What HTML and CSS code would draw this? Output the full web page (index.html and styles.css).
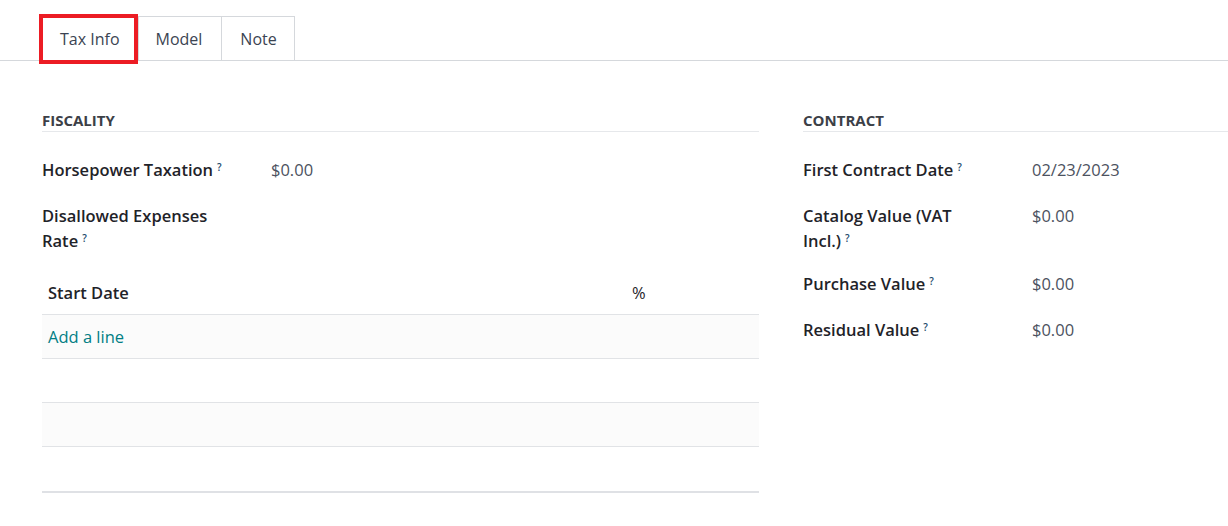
FILE: index.html
```html
<!DOCTYPE html>
<html>
<head>
<meta charset="utf-8">
<link rel="stylesheet" href="styles.css">
</head>
<body>
<div class="tabs">
  <div class="tab active">Tax Info</div>
  <div class="tab model">Model</div>
  <div class="tab note">Note</div>
</div>
<div class="sheet">
  <div class="group">
    <div class="heading">Fiscality</div>
    <div class="row">
      <div class="label">Horsepower Taxation<sup>?</sup></div>
      <div class="value">$0.00</div>
    </div>
    <div class="row">
      <div class="label">Disallowed Expenses Rate<sup>?</sup></div>
      <div class="value"></div>
    </div>
    <table class="lines">
      <thead>
        <tr><th class="c-date">Start Date</th><th class="c-pct">%</th></tr>
      </thead>
      <tbody>
        <tr class="odd"><td class="add" colspan="2">Add a line</td></tr>
        <tr><td colspan="2"></td></tr>
        <tr class="odd"><td colspan="2"></td></tr>
        <tr class="last"><td colspan="2"></td></tr>
      </tbody>
    </table>
  </div>
  <div class="group">
    <div class="heading">Contract</div>
    <div class="row">
      <div class="label">First Contract Date<sup>?</sup></div>
      <div class="value">02/23/2023</div>
    </div>
    <div class="row">
      <div class="label">Catalog Value (VAT Incl.)<sup>?</sup></div>
      <div class="value">$0.00</div>
    </div>
    <div class="row">
      <div class="label">Purchase Value<sup>?</sup></div>
      <div class="value">$0.00</div>
    </div>
    <div class="row">
      <div class="label">Residual Value<sup>?</sup></div>
      <div class="value">$0.00</div>
    </div>
  </div>
</div>
</body>
</html>
```
FILE: styles.css
```css
html, body {
  margin: 0;
  padding: 0;
  background: #ffffff;
}
body {
  width: 1228px;
  height: 526px;
  overflow: hidden;
  font-family: "Open Sans", "Noto Sans", sans-serif;
  font-size: 16.5px;
  color: #212529;
}
.tabs {
  display: flex;
  padding: 16px 0 0 40px;
  border-bottom: 1px solid #d5d8dc;
  height: 44px;
}
.tab {
  position: relative;
  height: 44px;
  box-sizing: border-box;
  border: 1px solid #d5d8dc;
  border-bottom: none;
  margin-left: -1px;
  padding: 0 18px 0 16px;
  line-height: 44px;
  font-size: 16px;
  color: #3b4452;
}
.tab.model {
  padding: 0 19px 0 17px;
}
.tab.note {
  padding: 0 17px 0 18px;
}
.tab:first-child {
  margin-left: 0;
}
.tab.active {
  background: #fff;
  height: 45px;
  margin-bottom: -1px;
  padding: 0 18px 0 19px;
}
.tab.active::after {
  content: "";
  position: absolute;
  left: -2px;
  top: -3px;
  width: 99px;
  height: 50px;
  box-sizing: border-box;
  border: 4px solid #ec1c24;
}
.sheet {
  display: grid;
  grid-template-columns: 717px 717px;
  column-gap: 44px;
  padding: 49px 0 0 42px;
}
.heading {
  font-size: 15px;
  font-weight: 700;
  text-transform: uppercase;
  line-height: 20px;
  color: #3c4047;
  padding-bottom: 1px;
  border-bottom: 1px solid #e6e8eb;
  margin-bottom: 25px;
}
.row {
  display: grid;
  grid-template-columns: 229px 1fr;
  margin-bottom: 18px;
  min-height: 28px;
}
.label {
  font-weight: 600;
  line-height: 25px;
  padding-right: 38px;
  color: #1f2329;
}
.label sup {
  font-size: 10px;
  font-weight: 600;
  color: #1b4a6b;
  margin-left: 4px;
  vertical-align: 5px;
  line-height: 0;
}
.value {
  line-height: 25px;
  color: #4c5260;
}
.lines {
  width: 717px;
  border-collapse: collapse;
}
.lines th {
  text-align: left;
  height: 43px;
  padding: 0 6px;
  border-bottom: 1px solid #e1e3e6;
  color: #1f2329;
}
.lines th.c-date {
  font-weight: 600;
}
.lines th.c-pct {
  font-weight: 400;
  width: 121px;
}
.lines td {
  height: 43px;
  padding: 0 6px;
  border-bottom: 1px solid #e1e3e6;
}
.lines tr.last td {
  height: 44px;
  border-bottom: 2px solid #dfe1e5;
}
.lines tr.odd td {
  background: #fbfbfb;
}
.lines td.add {
  color: #017e84;
}
```
